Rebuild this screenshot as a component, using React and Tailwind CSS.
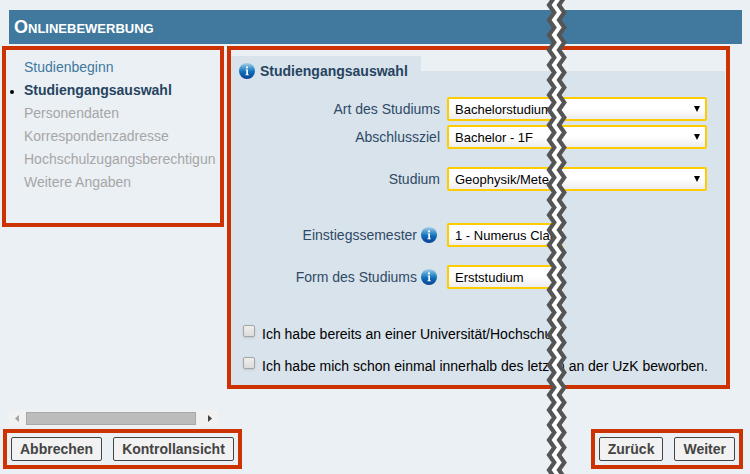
import { useId } from 'react'
import { clsx } from 'clsx'

const STEPS = [
  { label: 'Studienbeginn', state: 'done' },
  { label: 'Studiengangsauswahl', state: 'current' },
  { label: 'Personendaten', state: 'open' },
  { label: 'Korrespondenzadresse', state: 'open' },
  { label: 'Hochschulzugangsberechtigun', state: 'open' },
  { label: 'Weitere Angaben', state: 'open' },
]

// ── Info icon ─────────────────────────────────────────────────────────────────
function InfoIcon() {
  const id = useId()
  return (
    <svg viewBox="0 0 16 16" className="size-4 shrink-0" aria-hidden="true">
      <defs>
        <linearGradient id={id} x1="0" y1="0" x2="0" y2="1">
          <stop offset="0" stopColor="#a9cfe8" />
          <stop offset="0.3" stopColor="#4a9bd0" />
          <stop offset="0.55" stopColor="#0f6fba" />
          <stop offset="1" stopColor="#0a3f92" />
        </linearGradient>
      </defs>
      <circle cx="8" cy="8" r="8" fill={`url(#${id})`} />
      <circle cx="8" cy="4.4" r="1.1" fill="#fff" />
      <path d="M6.5 6.5H9v5h1v.8H6.300v-.8h1V7.300h-.8z" fill="#fff" />
    </svg>
  )
}

// ── Red frame around a region ─────────────────────────────────────────────────
function Frame({ className, children }) {
  return <div className={clsx('border-4 border-[#cc3300]', className)}>{children}</div>
}

// ── Label + drop-down ─────────────────────────────────────────────────────────
function SelectRow({ label, value, info, cut, className }) {
  const id = useId()
  return (
    <div className={clsx('flex items-center', className)}>
      <div className={clsx('flex w-[209px] shrink-0 items-center justify-end gap-1', info && 'pr-[3px]')}>
        <label htmlFor={id} className="text-[#2f4a66]">{label}</label>
        {info && <InfoIcon />}
      </div>
      <div className={clsx('relative ml-[7px]', cut ? 'w-[116px]' : 'mr-[18px] flex-1')}>
        <select
          id={id}
          className={clsx(
            'block h-6 w-full appearance-none border-2 border-[#ffcc00] bg-linear-to-b from-white from-50% to-[#ededed] pt-px pl-1.5 text-[13px] text-black',
            cut ? 'rounded-l-xs border-r-0' : 'rounded-xs',
          )}
        >
          <option>{value}</option>
        </select>
        {!cut && (
          <svg viewBox="0 0 6 6" className="pointer-events-none absolute top-[9px] right-[7px] size-1.5" aria-hidden="true">
            <path d="M0 0h6L3 6z" fill="#000" />
          </svg>
        )}
      </div>
    </div>
  )
}

// ── Tick box row ──────────────────────────────────────────────────────────────
function CheckRow({ children, className }) {
  return (
    <label className={clsx('flex items-start gap-[7px] leading-[18px] whitespace-nowrap text-black', className)}>
      <input
        type="checkbox"
        className="size-3 shrink-0 appearance-none rounded-xs border border-[#a5a5a5] bg-linear-to-b from-[#eeeeee] to-[#dcdcdc] shadow-sm"
      />
      {children}
    </label>
  )
}

function Button({ children }) {
  return (
    <button type="button" className="h-6 rounded-xs border border-[#444] bg-[#f2f2f2] px-2 text-sm leading-5 font-bold text-[#444]">
      {children}
    </button>
  )
}

// ── Torn strip across the page ────────────────────────────────────────────────
function TearLine() {
  return (
    <svg className="pointer-events-none absolute top-0 left-[545px] h-full w-6" aria-hidden="true">
      <defs>
        <pattern id="tear" width="24" height="15" patternUnits="userSpaceOnUse">
          {/* each line runs past the tile so that the corners stay sharp */}
          <g fill="none" strokeMiterlimit="10">
            <path d="M9 -10l5.300 7.500L9 5l5.300 7.500L9 20" stroke="#fff" strokeWidth="6" />
            <path d="M4 -10l5.300 7.500L4 5l5.300 7.500L4 20" stroke="#555" strokeWidth="4.200" />
            <path d="M14 -10l5.300 7.500L14 5l5.300 7.500L14 20" stroke="#555" strokeWidth="4.200" />
          </g>
        </pattern>
      </defs>
      <rect width="24" height="100%" fill="url(#tear)" />
    </svg>
  )
}

export default function App() {
  return (
    <div className="relative min-h-screen bg-[#ebf0f5] pt-2.5 pb-[5px] font-['Liberation_Sans',Arial,sans-serif] text-sm leading-5">
      <header className="mr-2 ml-[9px] flex h-[34px] items-center bg-[#40789e] pl-[5px]">
        <h1 className="text-lg font-bold text-white [font-variant:small-caps]">Onlinebewerbung</h1>
      </header>

      <main className="mt-0.5 mr-5 ml-0.5 flex items-start gap-[3px]">
        <Frame className="h-[181px] w-[222px] shrink-0">
          <nav className="pt-[5px]">
            <ul>
              {STEPS.map(({ label, state }) => (
                <li key={label} className="flex h-[23px] items-center">
                  <span className="flex w-[18px] shrink-0 pl-1">
                    {state === 'current' && <span className="mt-1 size-1 rounded-full bg-black" />}
                  </span>
                  <a
                    href="#"
                    className={clsx(
                      'whitespace-nowrap',
                      state === 'done' && 'text-[#40789e]',
                      state === 'current' && 'font-bold text-[#26445f]',
                      state === 'open' && 'text-[#a6a6a6]',
                    )}
                  >
                    {label}
                  </a>
                </li>
              ))}
            </ul>
          </nav>
        </Frame>

        <Frame className="min-w-0 flex-1">
          <form className="mt-1.5 mr-px">
            <div className="flex h-[15px] w-[190px] items-start gap-[5px] bg-[#d9e3ec] pt-[7px] pl-2">
              <InfoIcon />
              <h2 className="-mt-0.5 text-sm leading-5 font-bold text-[#26445f]">Studiengangsauswahl</h2>
            </div>
            <div className="bg-[#d9e3ec] pt-[26px] pb-2.5">
              <SelectRow label="Art des Studiums" value="Bachelorstudium" />
              <SelectRow label="Abschlussziel" value="Bachelor - 1F" className="mt-1" />
              <SelectRow label="Studium" value="Geophysik/Mete" className="mt-[18px]" />
              <SelectRow label="Einstiegssemester" value="1 - Numerus Clausus" info cut className="mt-8" />
              <SelectRow label="Form des Studiums" value="Erststudium" info cut className="mt-[18px]" />

              <CheckRow className="mt-9 ml-3">
                <span>Ich habe bereits an einer Universität/Hochschu</span>
              </CheckRow>
              <CheckRow className="mt-3.5 ml-3">
                <span>Ich habe mich schon einmal innerhalb des letzen an der UzK beworben.</span>
              </CheckRow>
            </div>
          </form>
        </Frame>
      </main>

      {/* Horizontal scroll bar below the step list */}
      <div className="mt-[21px] ml-[9px] flex h-[17px] w-[209px] items-center bg-[#f1f1f1]">
        <svg viewBox="0 0 17 17" className="size-[17px]" aria-hidden="true">
          <path d="M10 5v7L6 8.500z" fill="#a3a3a3" />
        </svg>
        <div className="h-[13px] flex-1 border border-[#a8a8a8] bg-[#bcbcbc]" />
        <svg viewBox="0 0 17 17" className="ml-[5px] size-[17px]" aria-hidden="true">
          <path d="M7 5v7l4-3.500z" fill="#444" />
        </svg>
      </div>

      <footer className="mt-0.5 mr-[7px] ml-[3px] flex justify-between">
        <Frame className="flex gap-[11px] p-1">
          <Button>Abbrechen</Button>
          <Button>Kontrollansicht</Button>
        </Frame>
        <Frame className="flex gap-[11px] p-1">
          <Button>Zurück</Button>
          <Button>Weiter</Button>
        </Frame>
      </footer>

      <TearLine />
    </div>
  )
}
